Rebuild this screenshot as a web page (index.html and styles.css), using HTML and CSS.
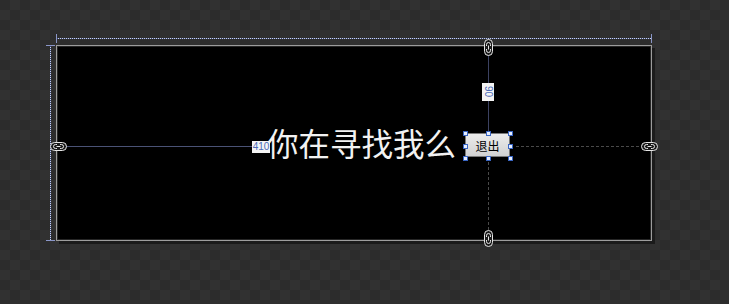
FILE: index.html
```html
<!DOCTYPE html>
<html lang="zh-CN">
<head>
    <meta charset="UTF-8">
    <title>窗体设计器</title>
    <link rel="stylesheet" href="styles.css">
</head>
<body>
    <div class="stage">
        <!-- 尺寸标线 -->
        <div class="dim dim-top"></div>
        <div class="dim dim-left"></div>

        <div class="form">
            <div class="form-body">
                <span class="caption">你在寻找我么</span>
                <button class="btn" type="button">退出</button>
            </div>
        </div>

        <!-- 布局约束 -->
        <div class="guide guide-left"></div>
        <div class="guide guide-top"></div>
        <div class="guide guide-right"></div>
        <div class="guide guide-bottom"></div>
        <span class="measure measure-left">410</span>
        <span class="measure measure-top">90</span>

        <span class="anchor anchor-left">
            <svg width="17" height="9" viewBox="0 0 17 9"><rect x="0.5" y="0.5" width="16" height="8" rx="4" fill="#1b1b1b" stroke="#e6e6e6"/><path d="M7 2.5H5.5a2 2 0 0 0 0 4H7M10 2.5h1.5a2 2 0 0 1 0 4H10M6.5 4.5h4" stroke="#e6e6e6" fill="none"/></svg>
        </span>
        <span class="anchor anchor-right">
            <svg width="17" height="9" viewBox="0 0 17 9"><rect x="0.5" y="0.5" width="16" height="8" rx="4" fill="#1b1b1b" stroke="#e6e6e6"/><path d="M7 2.5H5.5a2 2 0 0 0 0 4H7M10 2.5h1.5a2 2 0 0 1 0 4H10M6.5 4.5h4" stroke="#e6e6e6" fill="none"/></svg>
        </span>
        <span class="anchor anchor-top">
            <svg width="9" height="17" viewBox="0 0 9 17"><rect x="0.5" y="0.5" width="8" height="16" rx="4" fill="#1b1b1b" stroke="#e6e6e6"/><path d="M2.5 7V5.5a2 2 0 0 1 4 0V7M2.5 10v1.5a2 2 0 0 0 4 0V10M4.5 6.5v4" stroke="#e6e6e6" fill="none"/></svg>
        </span>
        <span class="anchor anchor-bottom">
            <svg width="9" height="17" viewBox="0 0 9 17"><rect x="0.5" y="0.5" width="8" height="16" rx="4" fill="#1b1b1b" stroke="#e6e6e6"/><path d="M2.5 7V5.5a2 2 0 0 1 4 0V7M2.5 10v1.5a2 2 0 0 0 4 0V10M4.5 6.5v4" stroke="#e6e6e6" fill="none"/></svg>
        </span>

        <!-- 选中控件的手柄 -->
        <span class="grip" style="left:463px; top:131px"></span>
        <span class="grip" style="left:486px; top:131px"></span>
        <span class="grip" style="left:508px; top:131px"></span>
        <span class="grip" style="left:463px; top:144px"></span>
        <span class="grip" style="left:508px; top:144px"></span>
        <span class="grip" style="left:463px; top:156px"></span>
        <span class="grip" style="left:486px; top:156px"></span>
        <span class="grip" style="left:508px; top:156px"></span>
    </div>
</body>
</html>
```
FILE: styles.css
```css
html,body{
    margin:0; padding:0; height:100%;
}
body{
    background:#2c2c2c;
    font-family:"Noto Sans CJK SC","Liberation Sans",sans-serif;
}
.stage{
    width:729px; height:304px; position:relative; overflow:hidden;
    background-color:#2c2c2c;
    background-image:conic-gradient(#313131 25%, transparent 0 50%, #313131 0 75%, transparent 0);
    background-size:20px 20px;
    padding:45px 0 0 56px; box-sizing:border-box;
}
.form{
    width:596px; height:196px; box-sizing:border-box;
    background:#000; border:1px solid #9c9c9c;
    box-shadow:inset 0 0 0 1px #262626, 3px 3px 0 #1b1b1b;
}
.form-body{
    height:100%; display:flex; align-items:center;
    padding:0 0 2px 210px; box-sizing:border-box;
}
.caption{
    color:#f2f2f2; font-size:31.5px; line-height:32px; white-space:nowrap;
}
.btn{
    width:45px; height:24px; margin:6px 0 0 9px; padding:0;
    font-family:"Noto Sans CJK SC",sans-serif; font-size:12px; color:#000;
    background:linear-gradient(#ececec,#d2d2d2); border:1px solid #7a7a7a;
}

.dim{ position:absolute; }
.dim-top{
    left:56px; top:38px; width:596px; height:1px;
    background:repeating-linear-gradient(90deg,#c9d3ee 0 1px,#3b4670 1px 2px);
}
.dim-top::before,.dim-top::after{
    content:""; position:absolute; top:-4px; width:1px; height:9px; background:#8a96c8;
}
.dim-top::before{ left:0; }
.dim-top::after{ right:0; }
.dim-left{
    left:50px; top:45px; width:1px; height:196px;
    background:repeating-linear-gradient(180deg,#c9d3ee 0 1px,#3b4670 1px 2px);
}
.dim-left::before,.dim-left::after{
    content:""; position:absolute; left:-4px; width:9px; height:1px; background:#8a96c8;
}
.dim-left::before{ top:0; }
.dim-left::after{ bottom:0; }

.guide{ position:absolute; }
.guide-left{ left:66px; top:146px; width:187px; height:1px; background:#4a5275; }
.guide-top{ left:488px; top:55px; width:1px; height:77px; background:#3c4262; }
.guide-right{
    left:516px; top:146px; width:124px; height:1px;
    background:repeating-linear-gradient(90deg,#4a4a4a 0 3px,transparent 3px 5px);
}
.guide-bottom{
    left:488px; top:162px; width:1px; height:68px;
    background:repeating-linear-gradient(180deg,#4a4a4a 0 3px,transparent 3px 5px);
}

.measure{
    position:absolute; background:#f4f4f4; color:#4a6ab8;
    font-family:"Liberation Sans",sans-serif; font-size:10px; line-height:12px;
    text-align:center;
}
.measure-left{ left:252px; top:141px; width:18px; height:12px; }
.measure-top{ left:482px; top:83px; width:12px; height:18px; writing-mode:vertical-rl; line-height:12px; }

.anchor{ position:absolute; display:block; line-height:0; }
.anchor-left{ left:50px; top:142px; }
.anchor-right{ left:641px; top:142px; }
.anchor-top{ left:484px; top:39px; }
.anchor-bottom{ left:484px; top:230px; }

.grip{
    position:absolute; width:5px; height:5px; box-sizing:border-box;
    background:#e6eeff; border:1px solid #3a66c4;
}
```
